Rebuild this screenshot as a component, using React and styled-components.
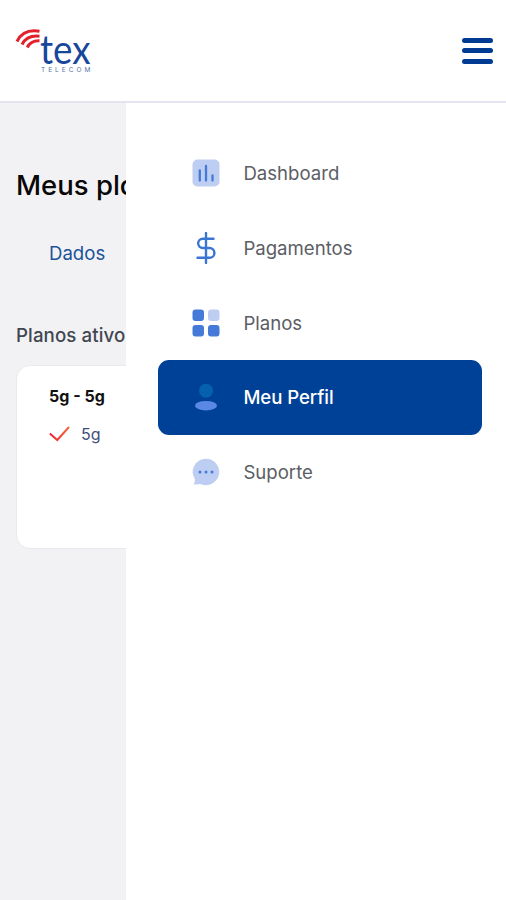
import React from "react";
import styled, { createGlobalStyle } from "styled-components";

const GlobalStyle = createGlobalStyle`
  * {
    box-sizing: border-box;
  }

  body {
    margin: 0;
    background: #f2f2f4;
    font-family: Inter, "Liberation Sans", sans-serif;
  }
`;

const Page = styled.div`
  height: 100vh;
  display: flex;
  flex-direction: column;
  overflow: hidden;
`;

const Header = styled.header`
  height: 103px;
  flex: none;
  display: flex;
  align-items: center;
  justify-content: space-between;
  padding: 0 13px 0 12px;
  background: #fff;
  border-bottom: 2px solid #e3e4f0;
`;

const MenuButton = styled.button`
  width: 31px;
  height: 26px;
  padding: 0;
  border: 0;
  background: none;
  display: flex;
  flex-direction: column;
  justify-content: space-between;
`;

const MenuBar = styled.span`
  width: 100%;
  height: 5px;
  border-radius: 3px;
  background: #003b93;
`;

const Body = styled.div`
  flex: 1;
  display: flex;
`;

const Content = styled.main`
  width: 126px;
  flex: none;
  padding: 62px 0 0 16px;
  overflow: hidden;
  white-space: nowrap;
`;

const Title = styled.h1`
  margin: 0;
  font-size: 27.5px;
  font-weight: 500;
  line-height: 40px;
  color: #080808;
  font-feature-settings: "cv11";
`;

const Tab = styled.div`
  margin-top: 33px;
  padding-left: 33px;
  font-size: 18.6px;
  line-height: 30px;
  color: #1b539a;
`;

const SectionTitle = styled.h2`
  margin: 53px 0 0;
  font-size: 18.7px;
  font-weight: 500;
  line-height: 30px;
  letter-spacing: 0.1px;
  color: #414750;
`;

const PlanCard = styled.div`
  width: 300px;
  height: 184px;
  margin-top: 14px;
  padding: 17px 32px;
  background: #fff;
  border: 1px solid #e9eaee;
  border-radius: 14px;
`;

const PlanName = styled.div`
  font-size: 16px;
  font-weight: 700;
  line-height: 26px;
  color: #111;
`;

const PlanFeature = styled.div`
  margin-top: 12px;
  display: flex;
  align-items: center;
  gap: 11px;
  font-size: 16px;
  line-height: 26px;
  color: #3d5079;
`;

const Drawer = styled.nav`
  flex: 1;
  padding: 33.2px 24px 0 32px;
  background: #fff;
`;

const DrawerItem = styled.a`
  height: 74.6px;
  display: flex;
  align-items: center;
  gap: 23.8px;
  padding-left: 33.6px;
  border-radius: 11px;
  font-size: 18.6px;
  font-weight: ${props => (props.$active ? 500 : 400)};
  letter-spacing: ${props => (props.$active ? "-0.05px" : "normal")};
  color: ${props => (props.$active ? "#fff" : "#5b5e64")};
  background: ${props => (props.$active ? "#004198" : "transparent")};
`;

const Icon = styled.svg`
  width: 28px;
  height: 32px;
  flex: none;
`;

const Logo = () => (
  <svg width="84" height="48" viewBox="0 0 84 48">
    <g fill="none" stroke="#e5202d" strokeWidth="3">
      <path d="M5 14.5C8.5 7 16 2.5 27.5 4.2" />
      <path d="M10 17.5C13 11.5 18.5 8.3 27.5 9.2" />
      <path d="M15.3 20.5C17.5 16 21.5 13.5 27.5 13.8" />
    </g>
    <text
      x="28"
      y="36.5"
      fill="#17469b"
      fontFamily="Lato, sans-serif"
      fontSize="41"
      textLength="50.5"
      lengthAdjust="spacingAndGlyphs"
    >
      tex
    </text>
    <text
      x="29"
      y="44.7"
      fill="#5874a8"
      fontFamily="Inter, sans-serif"
      fontSize="6.5"
      letterSpacing="3"
    >
      TELECOM
    </text>
  </svg>
);

const DashboardIcon = () => (
  <Icon viewBox="0 0 28 32">
    <rect x="0.5" y="2.5" width="27" height="27" rx="5" fill="#bdcef2" />
    <path
      d="M7.8 13.5V23.5M14 9V23.5M20.5 18.5V23.5"
      stroke="#4479d6"
      strokeWidth="2.3"
      strokeLinecap="round"
    />
  </Icon>
);

const PaymentsIcon = () => (
  <Icon viewBox="0 0 28 32">
    <path
      d="M14 1V31M21.5 6.7H10.8A4.65 4.65 0 0 0 10.8 16H17.5A4.9 4.9 0 0 1 17.5 25.8H5.5"
      fill="none"
      stroke="#3975d2"
      strokeWidth="2.4"
      strokeLinecap="round"
    />
  </Icon>
);

const PlansIcon = () => (
  <Icon viewBox="0 0 28 32">
    <g fill="#467ad8">
      <rect x="0.5" y="2.5" width="11.5" height="11.5" rx="3" />
      <rect x="0.5" y="18" width="11.5" height="11.5" rx="3" />
      <rect x="16" y="18" width="11.5" height="11.5" rx="3" />
    </g>
    <rect x="16" y="2.5" width="11.5" height="11.5" rx="3" fill="#bdcef2" />
  </Icon>
);

const ProfileIcon = () => (
  <Icon viewBox="0 0 28 32">
    <circle cx="14" cy="9.8" r="7" fill="#0560ad" />
    <ellipse cx="14" cy="24.7" rx="11" ry="4.8" fill="#5b88e6" />
  </Icon>
);

const SupportIcon = () => (
  <Icon viewBox="0 0 28 32">
    <path
      d="M14 2.8A13.2 13.2 0 1 1 8.5 28Q5 28.8 1.5 28.2Q3.4 26 2.8 23A13.2 13.2 0 0 1 14 2.8Z"
      fill="#bdcef2"
    />
    <g fill="#4479d6">
      <circle cx="8" cy="16" r="1.5" />
      <circle cx="14" cy="16" r="1.5" />
      <circle cx="20" cy="16" r="1.5" />
    </g>
  </Icon>
);

const CheckIcon = () => (
  <svg width="21" height="18" viewBox="0 0 21 18">
    <defs>
      <linearGradient id="check" x1="0" y1="0" x2="1" y2="0">
        <stop offset="0" stopColor="#ee1f37" />
        <stop offset="1" stopColor="#f26b3c" />
      </linearGradient>
    </defs>
    <path d="M0.8 8.5L8.3 15L20 2" fill="none" stroke="url(#check)" strokeWidth="2" />
  </svg>
);

const items = [
  { label: "Dashboard", icon: DashboardIcon },
  { label: "Pagamentos", icon: PaymentsIcon },
  { label: "Planos", icon: PlansIcon },
  { label: "Meu Perfil", icon: ProfileIcon, active: true },
  { label: "Suporte", icon: SupportIcon }
];

export default function App() {
  return (
    <Page>
      <GlobalStyle />
      <Header>
        <Logo />
        <MenuButton aria-label="Menu">
          <MenuBar />
          <MenuBar />
          <MenuBar />
        </MenuButton>
      </Header>
      <Body>
        <Content>
          <Title>Meus planos</Title>
          <Tab>Dados</Tab>
          <SectionTitle>Planos ativos</SectionTitle>
          <PlanCard>
            <PlanName>5g - 5g</PlanName>
            <PlanFeature>
              <CheckIcon />
              5g
            </PlanFeature>
          </PlanCard>
        </Content>
        <Drawer>
          {items.map(({ label, icon: ItemIcon, active }) => (
            <DrawerItem key={label} $active={active}>
              <ItemIcon />
              {label}
            </DrawerItem>
          ))}
        </Drawer>
      </Body>
    </Page>
  );
}
